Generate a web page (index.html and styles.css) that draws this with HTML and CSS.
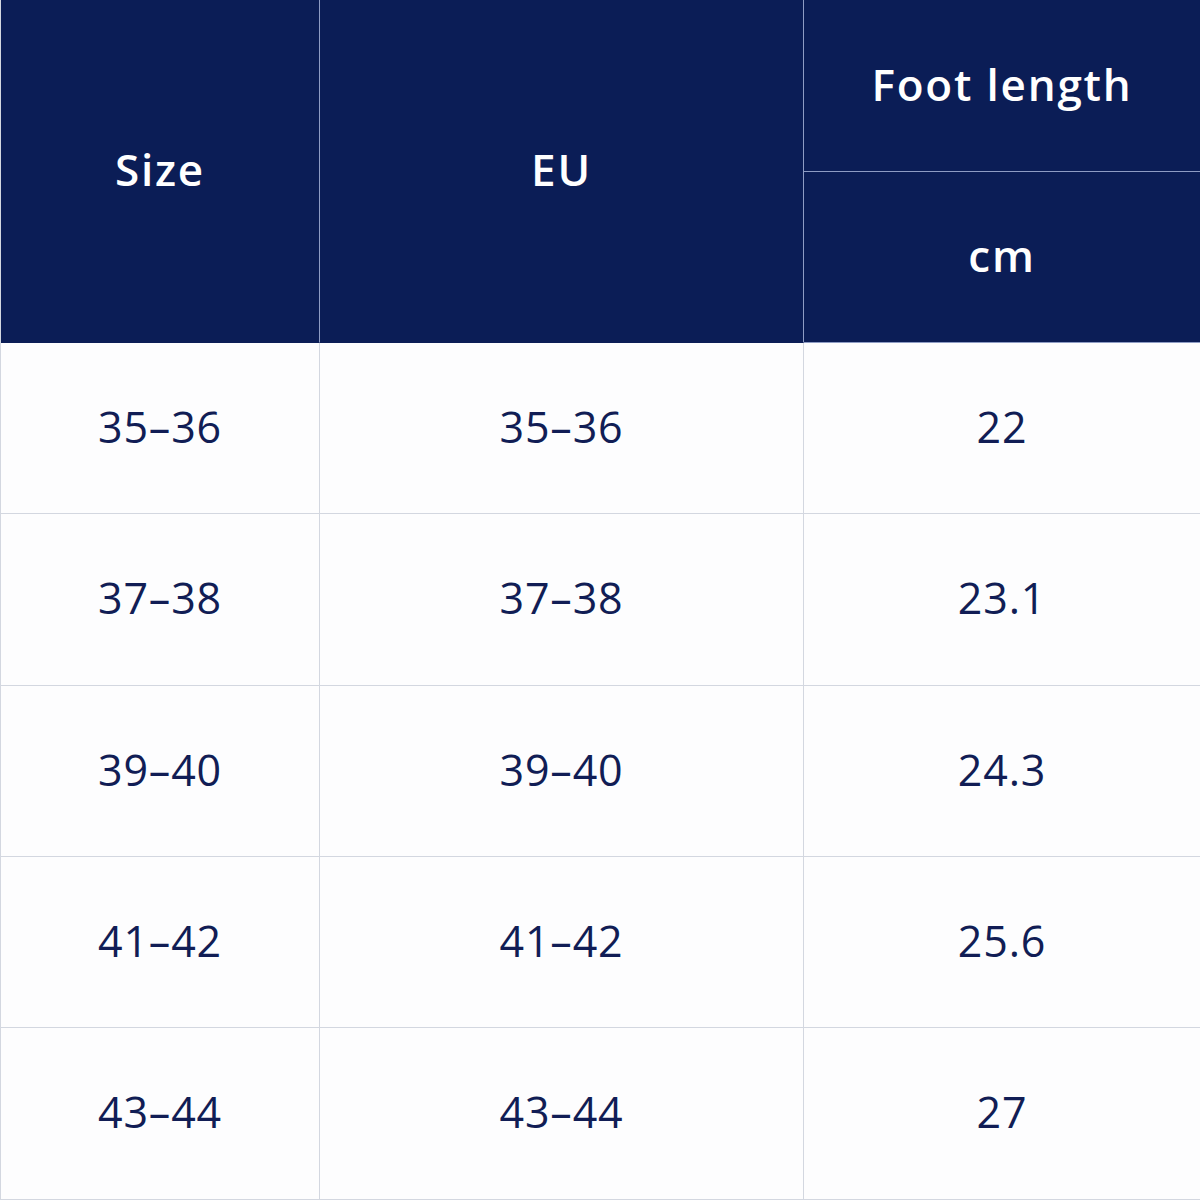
FILE: index.html
```html
<!DOCTYPE html>
<html>
<head>
<meta charset="utf-8">
<link rel="stylesheet" href="styles.css">
</head>
<body>
<div class="chart">
  <div class="cell head span2">Size</div>
  <div class="cell head span2">EU</div>
  <div class="cell head">Foot length</div>
  <div class="cell head">cm</div>

  <div class="cell">35–36</div><div class="cell">35–36</div><div class="cell">22</div>
  <div class="cell">37–38</div><div class="cell">37–38</div><div class="cell">23.1</div>
  <div class="cell">39–40</div><div class="cell">39–40</div><div class="cell">24.3</div>
  <div class="cell">41–42</div><div class="cell">41–42</div><div class="cell">25.6</div>
  <div class="cell">43–44</div><div class="cell">43–44</div><div class="cell">27</div>
</div>
</body>
</html>
```
FILE: styles.css
```css
html, body { margin: 0; padding: 0; background: #fff; }
.chart {
  width: 1200px;
  height: 1200px;
  display: grid;
  grid-template-columns: 319px 484px 397px;
  grid-template-rows: 172px 171px 171px 172px 171px 171px 172px;
  font-family: "Open Sans", "DejaVu Sans", sans-serif;
  box-sizing: border-box;
  border-left: 1px solid #d3d7e0;
}
.cell {
  display: flex;
  align-items: center;
  justify-content: center;
  font-size: 43px;
  color: #111d55;
  border-right: 1px solid #d3d7e0;
  border-bottom: 1px solid #d3d7e0;
  background: #fdfdfe;
  letter-spacing: 0.8px;
  padding-bottom: 4px;
  box-sizing: border-box;
}
.head {
  background: #0b1d56;
  color: #fff;
  font-weight: 600;
  font-size: 44px;
  border-right-color: #8e9cc4;
  border-bottom-color: #8e9cc4;
  letter-spacing: 1.8px;
}
.span2 { grid-row: span 2; border-bottom-color: #0b1d56; }
```
